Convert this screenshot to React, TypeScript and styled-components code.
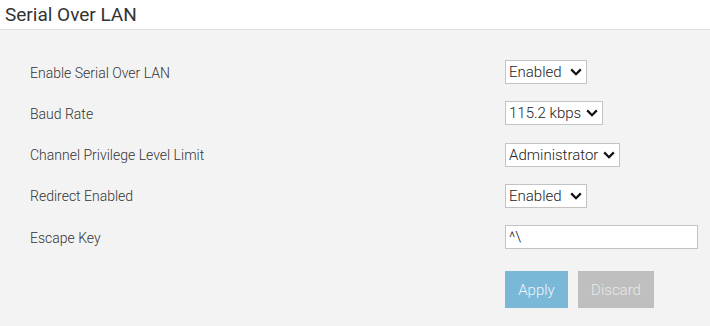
import { createGlobalStyle } from 'styled-components';
import styled from 'styled-components';

const GlobalStyle = createGlobalStyle`
  html, body {
    margin: 0;
    padding: 0;
    background: #f3f3f3;
    font-family: Roboto, 'Liberation Sans', sans-serif;
  }
`

type Option = { label: string; value: string }

const fields: { label: string; options: Option[]; value: string }[] = [
  { label: 'Enable Serial Over LAN', value: 'enabled', options: [{ label: 'Enabled', value: 'enabled' }, { label: 'Disabled', value: 'disabled' }] },
  { label: 'Baud Rate', value: '115200', options: [{ label: '9.6 kbps', value: '9600' }, { label: '19.2 kbps', value: '19200' }, { label: '38.4 kbps', value: '38400' }, { label: '57.6 kbps', value: '57600' }, { label: '115.2 kbps', value: '115200' }] },
  { label: 'Channel Privilege Level Limit', value: 'admin', options: [{ label: 'User', value: 'user' }, { label: 'Operator', value: 'operator' }, { label: 'Administrator', value: 'admin' }] },
  { label: 'Redirect Enabled', value: 'enabled', options: [{ label: 'Enabled', value: 'enabled' }, { label: 'Disabled', value: 'disabled' }] },
]

const Chevron = () => (
  <Arrow width="12" height="8" viewBox="0 0 12 8">
    <path d="M1.2 1.4 L6 6.2 L10.8 1.4" fill="none" stroke="#111" strokeWidth="2.2" />
  </Arrow>
)

const Dropdown = ({ options, value }: { options: Option[]; value: string }) => (
  <SelectWrap>
    <Select defaultValue={value}>
      {options.map(o => <option key={o.value} value={o.value}>{o.label}</option>)}
    </Select>
    <Chevron />
  </SelectWrap>
)

const App = () => {
  return (
    <>
      <GlobalStyle />
      <Page>
        <Header>
          <h1>Serial Over LAN</h1>
        </Header>
        <Form>
          {fields.map(f => (
            <Row key={f.label}>
              <Label>{f.label}</Label>
              <Dropdown options={f.options} value={f.value} />
            </Row>
          ))}
          <Row>
            <Label>Escape Key</Label>
            <TextInput defaultValue="^\" />
          </Row>
          <Actions>
            <Button $variant="primary">Apply</Button>
            <Button $variant="muted">Discard</Button>
          </Actions>
        </Form>
      </Page>
    </>
  )
}

export default App;

const Page = styled.div`
  width: 710px;
  height: 326px;
  background: #f3f3f3;
  overflow: hidden;
`

const Header = styled.header`
  height: 29px;
  background: #fff;
  border-bottom: 1px solid #dcdcdc;
  padding-left: 5px;
  display: flex;
  align-items: center;

  h1 {
    margin: 0;
    font-size: 19px;
    font-weight: 400;
    color: #333;
    line-height: 24px;
  }
`

const Form = styled.section`
  padding: 30px 0 0 30px;
  display: flex;
  flex-direction: column;
  gap: 17.25px;
`

const Row = styled.div`
  display: grid;
  grid-template-columns: 475px auto;
  align-items: center;
  height: 24px;
`

const Label = styled.span`
  font-size: 14px;
  font-weight: 300;
  color: #333;
  padding-top: 1px;
`

const SelectWrap = styled.div`
  position: relative;
  justify-self: start;
  display: inline-flex;
`

const Select = styled.select`
  appearance: none;
  -webkit-appearance: none;
  height: 24px;
  box-sizing: border-box;
  border: 1px solid #c3c3c3;
  border-radius: 0;
  background: #fff;
  font-family: Roboto, 'Liberation Sans', sans-serif;
  font-size: 15px;
  font-weight: 300;
  color: #222;
  padding: 0 20px 0 3px;
  outline: none;
`

const Arrow = styled.svg`
  position: absolute;
  right: 5px;
  top: 8px;
  pointer-events: none;
`

const TextInput = styled.input`
  width: 193px;
  height: 24px;
  box-sizing: border-box;
  border: 1px solid #c3c3c3;
  background: #fff;
  font-family: Roboto, 'Liberation Sans', sans-serif;
  font-size: 15px;
  font-weight: 300;
  color: #222;
  padding: 0 3px;
  outline: none;
`

const Actions = styled.div`
  display: flex;
  gap: 10px;
  padding-left: 475px;
  margin-top: 4.75px;
`

const Button = styled.button<{ $variant: 'primary' | 'muted' }>`
  height: 37px;
  border: none;
  border-radius: 0;
  padding: 0;
  font-family: Roboto, 'Liberation Sans', sans-serif;
  font-size: 15px;
  font-weight: 300;
  cursor: pointer;
  background: ${p => (p.$variant === 'primary' ? '#7ab8d8' : '#bfbfbf')};
  color: ${p => (p.$variant === 'primary' ? '#eef6fa' : '#e8e8e8')};
  width: ${p => (p.$variant === 'primary' ? '63px' : '76px')};
`
